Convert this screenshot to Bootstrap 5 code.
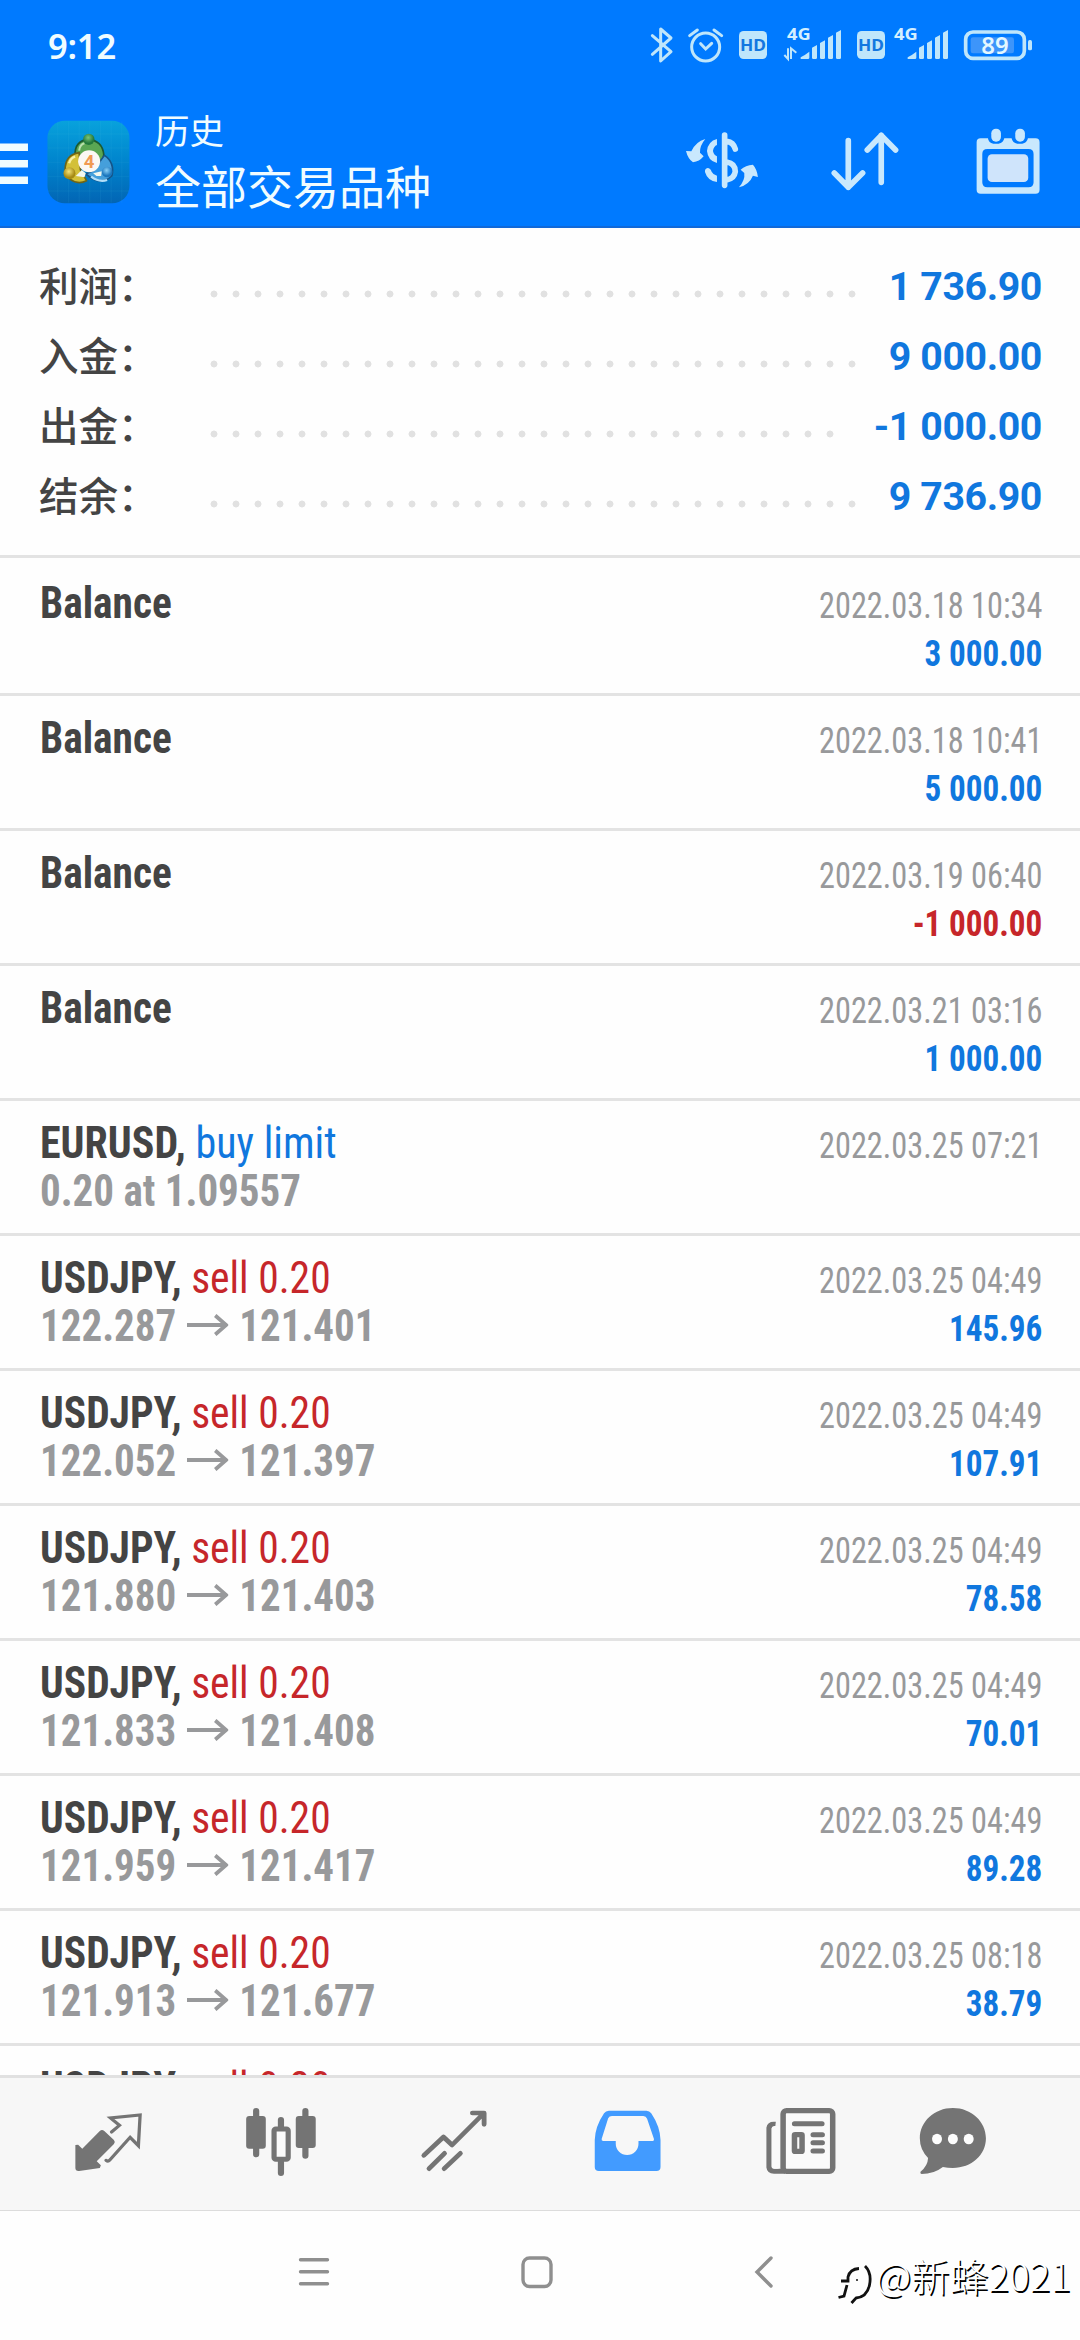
<!DOCTYPE html>
<html lang="zh-CN">
<head>
<meta charset="utf-8">
<meta name="viewport" content="width=device-width, initial-scale=1">
<title>历史</title>
<link href="https://cdn.jsdelivr.net/npm/bootstrap@5.3.0/dist/css/bootstrap.min.css" rel="stylesheet">
<script src="https://cdn.jsdelivr.net/npm/bootstrap@5.3.0/dist/js/bootstrap.bundle.min.js"></script>
<style>
  body{width:1080px;height:2340px;overflow:hidden;background:#fefefe;font-family:Roboto,"Noto Sans CJK SC",sans-serif;color:#444}
  .top-area{background:#007aff;height:228px;border-bottom:2px solid #1169d8;color:#f0fcff}
  .status{height:100px}
  .clock{font:600 34.5px/91px "Noto Sans",sans-serif;letter-spacing:-.2px;padding-left:48px;width:620px}
  .titlebar{height:126px}
  .titles{font-family:"Noto Sans CJK SC",sans-serif;padding-left:25px;width:551px}
  .titles .t1{font-size:34.5px;line-height:46px;padding-top:6px}
  .titles .t2{font-size:46px;line-height:60px;padding-top:2px}
  .appicon{margin:20px 0 0 19px}
  .burger{margin-top:43px}
  .act{margin-top:20px}
  .summary{height:330px;padding:23px 38px 0 39px;border-bottom:3px solid #e3e3e3}
  .sumrow{height:70px;line-height:70px}
  .sumrow .lab{font:500 39.5px/66px "Noto Sans CJK SC",sans-serif;height:70px;width:171px;white-space:nowrap}
  .dots{width:660px;height:8px;margin-top:16px;background:radial-gradient(circle at 4px 4px,#e1e1e1 3.1px,transparent 3.8px) 0 0/22px 8px repeat-x}
  .dots.fewer{width:638px}
  .sumrow .val{font-size:39.3px;font-weight:700;letter-spacing:-.4px;padding-top:2px;line-height:70px;color:#1077de}
  .deals{height:1517px;overflow:hidden;padding-top:3px}
  .deal{height:135px;padding:19px 38px 0 40px;border-bottom:3px solid #e3e3e3;font-family:"Roboto Condensed",Roboto,sans-serif;font-size:43.5px;line-height:48px;white-space:nowrap}
  .deal b,.deal .g{font-weight:700}
  .deal .n,.deal .g{transform-origin:0 0;transform:scaleX(.965)}
  .deal .g{color:#98999b;transform:scaleX(.942)}
  .deal .bal{transform:scaleX(.95)}
  .deal .jpy{transform:scaleX(.955)}
  .deal .r{font-size:36.5px;padding-top:2px}
  .deal .when,.deal .amt{transform-origin:100% 0;transform:scaleX(.885)}
  .deal .when{color:#98999b}
  .deal .amt{font-weight:700;transform:scaleX(.908)}
  .arr{vertical-align:5px;margin:0 1.5px}
  .up{color:#1077de}.down{color:#c6262a}
  .tabs{height:136px;background:#f7f7f7;border-top:3px solid #e1e1e1;border-bottom:1px solid #dcdcdc;padding-left:22px}
  .sysnav{height:129px;padding-left:280px}
  .wm{font:300 38.6px/44px "Noto Sans CJK SC",sans-serif;color:#fff;text-shadow:1.5px 1.5px .5px #000;margin-top:41px;white-space:nowrap}
</style>
</head>
<body>
<svg width="0" height="0" class="position-absolute"><symbol id="arrow" viewBox="0 0 44 22"><path d="M0 11H42M30 1.500L41.500 11L30 20.500" fill="none" stroke="#98999b" stroke-width="4"/></symbol></svg>
<header class="top-area">
  <div class="status d-flex">
    <div class="clock">9:12</div>
    <svg width="460" height="100" viewBox="0 0 1380 300" fill="#bfe6fb" stroke="none">
      <path d="M97 107L153 155L122 183V87L153 114L97 163" fill="none" stroke="#bfe6fb" stroke-width="9" stroke-linejoin="round" stroke-linecap="round"/>
      <g fill="none" stroke="#bfe6fb" stroke-width="9" stroke-linecap="round"><circle cx="257" cy="141" r="42"/><path d="M242 131L257 147L275 130M209 107L232 90M282 90L305 107"/></g>
      <rect x="357" y="93" width="84" height="84" rx="14"/><rect x="711" y="93" width="84" height="84" rx="14"/>
      <g font-family="Noto Sans" font-weight="700" font-size="49" fill="#1377e0"><text x="360" y="153" textLength="78" lengthAdjust="spacingAndGlyphs">HD</text><text x="714" y="153" textLength="78" lengthAdjust="spacingAndGlyphs">HD</text></g>
      <g font-family="Noto Sans" font-weight="700" font-size="48" fill="#d4efff"><text x="501" y="120" textLength="71" lengthAdjust="spacingAndGlyphs">4G</text><text x="822" y="120" textLength="71" lengthAdjust="spacingAndGlyphs">4G</text></g>
      <path d="M493 165L504 177V145M513 177V145L529 158" fill="none" stroke="#bfe6fb" stroke-width="6"/>
      <path id="sig" d="M542 177V172Q558 163 568 155V173Q568 177 564 177ZM576 143L591 135V173Q591 177 587 177H580Q576 177 576 173ZM600 129L615 121V173Q615 177 611 177H604Q600 177 600 173ZM624 113L639 105V173Q639 177 635 177H628Q624 177 624 173ZM648 98L663 90V173Q663 177 659 177H652Q648 177 648 173Z"/>
      <use href="#sig" x="321"/>
      <rect x="1037" y="96" width="176" height="79" rx="22" fill="none" stroke="#bfe6fb" stroke-width="11"/>
      <rect x="1052" y="112" width="130" height="48" rx="7" fill="#3d95fa"/>
      <rect x="1224" y="120" width="12" height="31" rx="5"/>
      <text x="1084" y="161" font-family="Noto Sans" font-weight="600" font-size="69" fill="#e4f7ff" textLength="82" lengthAdjust="spacingAndGlyphs">89</text>
    </svg>
  </div>
  <div class="titlebar d-flex">
    <svg class="burger" width="28" height="42" viewBox="0 0 28 42" fill="#f0fcff"><path d="M0 0.5H28V8H0ZM0 17H28V24.500H0ZM0 33.500H28V41H0Z"/></svg>
    <svg class="appicon" width="83" height="84" viewBox="0 0 248 252">
      <defs>
        <linearGradient id="bg" x2="0" y2="1"><stop offset="0" stop-color="#08a2dc"/><stop offset=".5" stop-color="#0084cd"/><stop offset="1" stop-color="#0265b4"/></linearGradient>
        <radialGradient id="gr" cx=".45" cy=".35"><stop offset="0" stop-color="#7cc576"/><stop offset="1" stop-color="#22783c"/></radialGradient>
        <radialGradient id="ye" cx=".45" cy=".35"><stop offset="0" stop-color="#f5e378"/><stop offset="1" stop-color="#a68a14"/></radialGradient>
        <radialGradient id="bl" cx=".45" cy=".35"><stop offset="0" stop-color="#8ad0f7"/><stop offset="1" stop-color="#1b76bd"/></radialGradient>
      </defs>
      <rect x="1" y="2" width="246" height="248" rx="52" fill="url(#bg)"/>
      <path d="M32 4V248M64 4V248M96 4V248M128 4V248M160 4V248M192 4V248M224 4V248M2 42H246M2 84H246M2 127H246M2 170H246M2 213H246" stroke="#55c6ec" stroke-opacity=".14" stroke-width="2"/>
      <path d="M84 106Q82 62 124 58Q166 62 170 104L164 132L92 116Z" fill="#5aa653" stroke="#1c5a31" stroke-width="5"/>
      <path d="M96 92Q98 74 112 70" stroke="#b9e0ae" stroke-width="6" fill="none"/>
      <path d="M96 98Q54 104 54 150L66 176Q92 196 118 182L100 150Z" fill="#d3c038" stroke="#6e6518" stroke-width="5"/>
      <path d="M66 130Q70 114 84 110" stroke="#f6f0a8" stroke-width="7" fill="none"/>
      <path d="M172 106Q204 128 194 168Q160 200 116 162L138 152Z" fill="#459fdb" stroke="#155488" stroke-width="5"/>
      <path d="M132 170Q156 188 180 180" stroke="#b4e0fa" stroke-width="7" fill="none"/>
      <path d="M86 168L104 150L116 160L112 172ZM138 160L164 154L162 168L148 168Z" fill="#f2f7ee"/>
      <circle cx="125" cy="58" r="17" fill="url(#gr)"/><circle cx="67" cy="160" r="18" fill="url(#ye)"/><circle cx="180" cy="156" r="16" fill="url(#bl)"/>
      <circle cx="126" cy="124" r="33" fill="#fbf8f4"/>
      <text x="126" y="144" text-anchor="middle" font-family="Roboto" font-weight="700" font-size="56" fill="#f09a52">4</text>
    </svg>
    <div class="titles"><div class="t1">历史</div><div class="t2">全部交易品种</div></div>
    <svg class="act" width="120" height="80" viewBox="60 60 360 240" fill="#c9e8fd">
      <path d="M194 105V256M200 124Q221 127 226 147M200 186Q226 190 226 215Q223 236 200 240" fill="none" stroke="#c9e8fd" stroke-width="17" stroke-linecap="round"/>
      <path d="M171 117V135Q161 139 159 153Q162 166 171 169V189Q144 183 141 153Q144 124 171 117ZM171 246Q143 243 135 216Q134 206 143 204Q151 204 155 215Q160 225 171 227Z"/>
      <path d="M136 117Q119 137 120 158L131 169Q118 185 99 187Q84 177 78 153L94 154Q107 125 136 117ZM237 262Q256 240 253 219L242 209Q257 195 279 194Q291 207 294 231L279 227Q268 254 237 262Z"/>
    </svg>
    <svg class="act" width="140" height="80" viewBox="420 60 420 240" fill="none" stroke="#c9e8fd" stroke-width="17" stroke-linecap="round" stroke-linejoin="round"><path d="M565 122V262M523 219L565 262L608 219M664 247V106M622 150L664 106L707 150"/></svg>
    <svg class="act" width="140" height="80" viewBox="840 60 420 240" fill="#c9e8fd">
      <path fill-rule="evenodd" d="M962 115H984Q986 130 1000 131H1016Q1030 130 1033 115H1055Q1058 130 1072 131H1087Q1101 130 1104 115H1127Q1139 115 1139 127V269Q1139 281 1127 281H962Q950 281 950 269V127Q950 115 962 115ZM982 147Q967 147 967 162V247Q967 262 982 262H1106Q1121 262 1121 247V162Q1121 147 1106 147Z"/>
      <rect x="983" y="163" width="122" height="83" rx="13" fill="#cfe4fb"/><rect x="994" y="86" width="29" height="39" rx="14"/><rect x="1066" y="86" width="29" height="39" rx="14"/>
    </svg>
  </div>
</header>

<section class="summary">
  <div class="sumrow d-flex align-items-center"><span class="lab">利润：</span><span class="dots"></span><span class="val ms-auto">1 736.90</span></div>
  <div class="sumrow d-flex align-items-center"><span class="lab">入金：</span><span class="dots"></span><span class="val ms-auto">9 000.00</span></div>
  <div class="sumrow d-flex align-items-center"><span class="lab">出金：</span><span class="dots fewer"></span><span class="val ms-auto">-1 000.00</span></div>
  <div class="sumrow d-flex align-items-center"><span class="lab">结余：</span><span class="dots"></span><span class="val ms-auto">9 736.90</span></div>
</section>

<main class="deals">
  <div class="deal d-flex justify-content-between"><div class="n bal"><b>Balance</b></div><div class="r text-end"><div class="when">2022.03.18 10:34</div><div class="amt up">3 000.00</div></div></div>
  <div class="deal d-flex justify-content-between"><div class="n bal"><b>Balance</b></div><div class="r text-end"><div class="when">2022.03.18 10:41</div><div class="amt up">5 000.00</div></div></div>
  <div class="deal d-flex justify-content-between"><div class="n bal"><b>Balance</b></div><div class="r text-end"><div class="when">2022.03.19 06:40</div><div class="amt down">-1 000.00</div></div></div>
  <div class="deal d-flex justify-content-between"><div class="n bal"><b>Balance</b></div><div class="r text-end"><div class="when">2022.03.21 03:16</div><div class="amt up">1 000.00</div></div></div>
  <div class="deal d-flex justify-content-between"><div><div class="n"><b>EURUSD,</b> <span class="up">buy limit</span></div><div class="g">0.20 at 1.09557</div></div><div class="r text-end"><div class="when">2022.03.25 07:21</div></div></div>
  <div class="deal d-flex justify-content-between"><div><div class="n jpy"><b>USDJPY,</b> <span class="down">sell 0.20</span></div><div class="g">122.287 <svg class="arr" width="44" height="22"><use href="#arrow"/></svg> 121.401</div></div><div class="r text-end"><div class="when">2022.03.25 04:49</div><div class="amt up">145.96</div></div></div>
  <div class="deal d-flex justify-content-between"><div><div class="n jpy"><b>USDJPY,</b> <span class="down">sell 0.20</span></div><div class="g">122.052 <svg class="arr" width="44" height="22"><use href="#arrow"/></svg> 121.397</div></div><div class="r text-end"><div class="when">2022.03.25 04:49</div><div class="amt up">107.91</div></div></div>
  <div class="deal d-flex justify-content-between"><div><div class="n jpy"><b>USDJPY,</b> <span class="down">sell 0.20</span></div><div class="g">121.880 <svg class="arr" width="44" height="22"><use href="#arrow"/></svg> 121.403</div></div><div class="r text-end"><div class="when">2022.03.25 04:49</div><div class="amt up">78.58</div></div></div>
  <div class="deal d-flex justify-content-between"><div><div class="n jpy"><b>USDJPY,</b> <span class="down">sell 0.20</span></div><div class="g">121.833 <svg class="arr" width="44" height="22"><use href="#arrow"/></svg> 121.408</div></div><div class="r text-end"><div class="when">2022.03.25 04:49</div><div class="amt up">70.01</div></div></div>
  <div class="deal d-flex justify-content-between"><div><div class="n jpy"><b>USDJPY,</b> <span class="down">sell 0.20</span></div><div class="g">121.959 <svg class="arr" width="44" height="22"><use href="#arrow"/></svg> 121.417</div></div><div class="r text-end"><div class="when">2022.03.25 04:49</div><div class="amt up">89.28</div></div></div>
  <div class="deal d-flex justify-content-between"><div><div class="n jpy"><b>USDJPY,</b> <span class="down">sell 0.20</span></div><div class="g">121.913 <svg class="arr" width="44" height="22"><use href="#arrow"/></svg> 121.677</div></div><div class="r text-end"><div class="when">2022.03.25 08:18</div><div class="amt up">38.79</div></div></div>
  <div class="deal d-flex justify-content-between"><div class="n jpy"><b>USDJPY,</b> <span class="down">sell 0.20</span></div></div>
</main>

<nav class="tabs d-flex">
  <svg width="173" height="132" viewBox="64 114 502.400 396" preserveAspectRatio="none" fill="#747474">
    <path d="M219 315L227 314L239 326L290 273Q296 267 303 273L331 300Q336 306 331 312L281 364L293 376L290 384L230 393Q219 394 219 384Z"/>
    <path d="M324 276L347 256L321 234L407 225L402 317L378 292L319 360Q314 366 308 361" fill="none" stroke="#747474" stroke-width="9.500" stroke-linecap="round"/>
  </svg>
  <svg width="173" height="132" viewBox="566.400 114 502.400 396" preserveAspectRatio="none" fill="#747474">
    <path d="M744 213V343M816 240V260M816 360V399M887 213V347" stroke="#747474" stroke-width="18" stroke-linecap="round"/>
    <rect x="715" y="228" width="57" height="98" rx="9"/><rect x="859" y="228" width="58" height="96" rx="9"/>
    <rect x="796" y="267" width="41" height="91" rx="5" fill="#fafafa" stroke="#747474" stroke-width="15"/>
  </svg>
  <svg width="173" height="132" viewBox="1068.800 114 502.400 396" preserveAspectRatio="none" fill="none" stroke="#747474" stroke-width="14" stroke-linecap="round" stroke-linejoin="round">
    <path d="M1231 346L1288 291L1313 315L1403 222M1372 219H1406V253"/><path d="M1246 386L1291 340M1290 386L1337 340"/>
  </svg>
  <svg width="173" height="132" viewBox="2.900 114 502.400 396" preserveAspectRatio="none" fill="#429bff">
    <path fill-rule="evenodd" d="M200 212H309Q318 212 323 220Q349 260 350 300V381Q350 393 338 393H171Q159 393 159 381V300Q160 260 186 220Q191 212 200 212ZM209 228Q201 228 198 235L179 297Q178 303 184 303H220V311A33 34 0 0 0 286 311V303H327Q332 303 331 297L311 236Q308 228 300 228Z"/>
  </svg>
  <svg width="173" height="132" viewBox="505.300 114 502.400 396" preserveAspectRatio="none" fill="none" stroke="#747474">
    <path d="M684 253Q667 251 665 264V382Q666 393 680 394H712" stroke-width="15"/>
    <rect x="673" y="258" width="24" height="128" rx="8" fill="#fafafa" stroke="none"/>
    <rect x="706" y="212" width="144" height="182" rx="10" fill="#fafafa" stroke-width="16"/>
    <path d="M739 251H819M793 284H820M793 308H820M793 333H820" stroke-width="15" stroke-linecap="round"/>
    <rect x="739" y="284" width="22" height="50" rx="2" stroke-width="16"/>
  </svg>
  <svg width="173" height="132" viewBox="1007.700 114 502.400 396" preserveAspectRatio="none" fill="#747474">
    <path d="M1199 204C1253 204 1295 245 1295 295C1295 345 1253 384 1199 384Q1184 384 1170 381Q1144 402 1108 402Q1103 401 1105 395Q1126 378 1127 354Q1103 329 1103 295C1103 245 1145 204 1199 204Z"/>
    <g fill="#fdfdfd"><ellipse cx="1153" cy="297" rx="14.500" ry="15.500"/><ellipse cx="1199" cy="297" rx="14.500" ry="15.500"/><ellipse cx="1245" cy="297" rx="14.500" ry="15.500"/></g>
  </svg>
</nav>
<footer class="sysnav d-flex">
  <svg width="554" height="128" viewBox="280 2211 554 128" fill="none" stroke="#8f8f8f" stroke-width="3.400" stroke-linecap="round">
    <path d="M300.500 2259.700H327.500M300.500 2271.700H327.500M300.500 2283.700H327.500"/>
    <rect x="523" y="2258" width="28" height="28.500" rx="6.500"/>
    <path d="M771 2258L757 2272L771 2286"/>
  </svg>
  <svg width="42" height="128" viewBox="834 2211 42 128" fill="none" stroke="#111" stroke-width="2.800">
    <path d="M841 2281H848V2277Q850 2269 859 2268.500M847 2285L844 2296L838.500 2297.500M865 2266Q872 2273 869.500 2285Q867 2297 856 2298L851.500 2303"/><circle cx="857" cy="2280" r="1" fill="#111" stroke="none"/>
  </svg>
  <div class="wm">@新蜂2021</div>
</footer>
</body>
</html>
